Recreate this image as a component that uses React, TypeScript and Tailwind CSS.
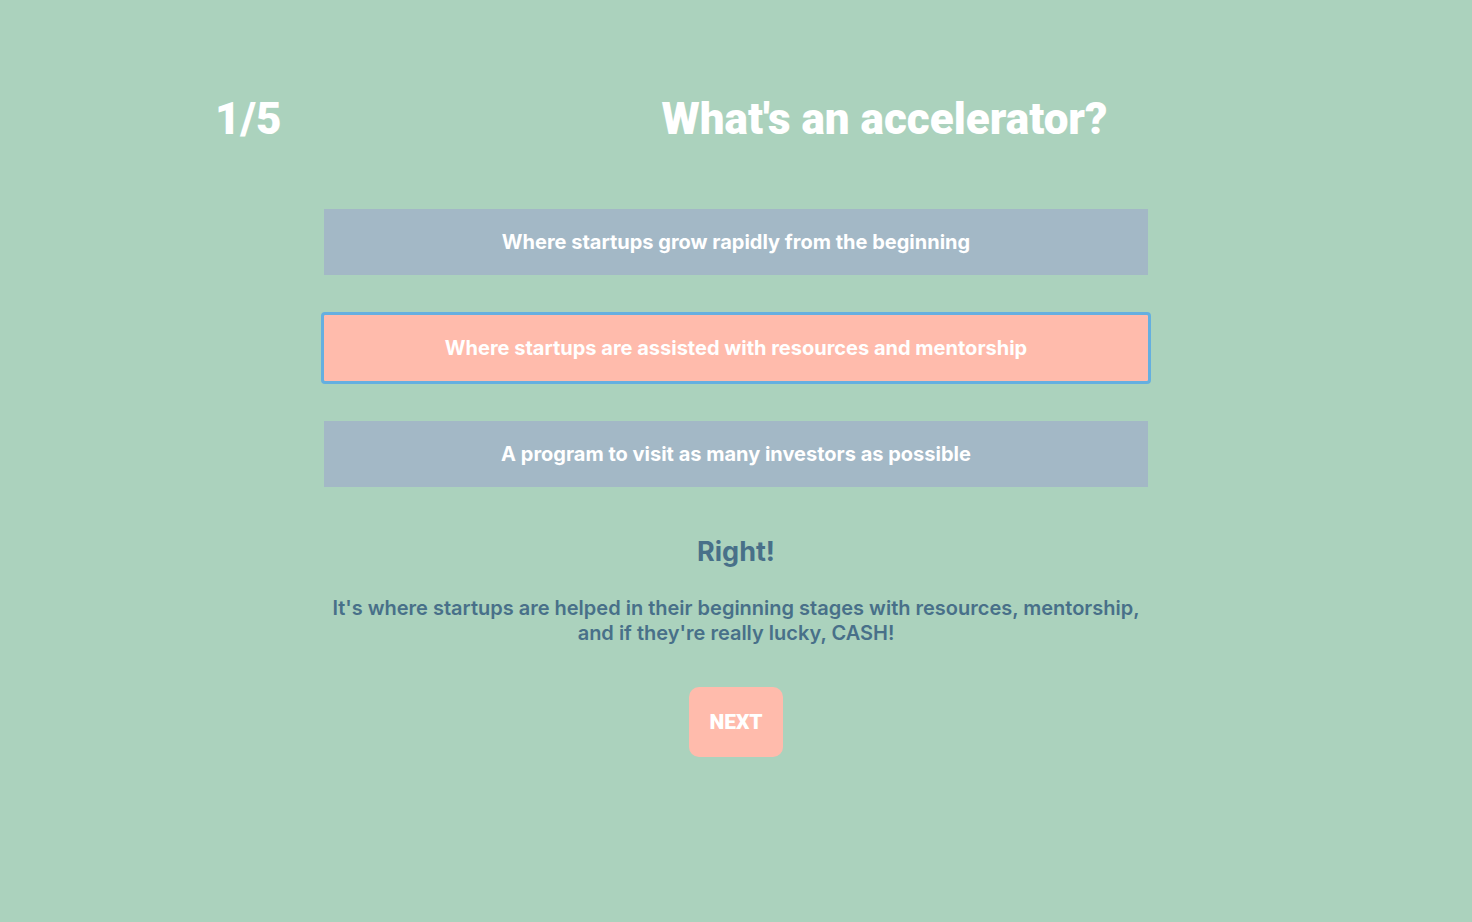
const answers = [
  { text: "Where startups grow rapidly from the beginning", correct: false },
  { text: "Where startups are assisted with resources and mentorship", correct: true },
  { text: "A program to visit as many investors as possible", correct: false },
];

export default function App() {
  return (
    <main className="min-h-screen bg-[#abd2bd] px-6 pt-[85px] pb-16 font-['Inter',sans-serif] text-white">
      <header className="mx-auto flex w-full max-w-[1042px] items-center font-['Roboto',sans-serif] text-[44px] leading-[68px] font-black">
        <p className="w-[297px] shrink-0">1/5</p>
        <h1 className="flex-1 text-center">What's an accelerator?</h1>
      </header>
      <section className="mx-auto mt-14 flex w-full max-w-[824px] flex-col items-center text-center">
        <div className="flex w-full flex-col gap-10">
          {answers.map((answer) => (
            <button
              key={answer.text}
              type="button"
              className={
                answer.correct
                  ? "w-full rounded-[1px] bg-[#ffbbac] px-4 py-5 text-[20px] leading-[26px] font-bold outline-3 outline-[#65afe0]"
                  : "w-full bg-[#a3b8c6] px-4 py-5 text-[20px] leading-[26px] font-bold"
              }
            >
              {answer.text}
            </button>
          ))}
        </div>
        <h2 className="mt-[47px] text-[27px] leading-9 font-bold text-[#487089]">Right!</h2>
        <p className="mt-[26px] text-[20px] leading-[25px] font-semibold text-[#487089]">
          It's where startups are helped in their beginning stages with resources, mentorship, and if they're really lucky, CASH!
        </p>
        <button
          type="button"
          className="mt-[41px] rounded-[10px] bg-[#ffbbac] px-5 py-[22px] font-['Roboto',sans-serif] text-[21px] leading-[26px] font-black"
        >
          NEXT
        </button>
      </section>
    </main>
  );
}
